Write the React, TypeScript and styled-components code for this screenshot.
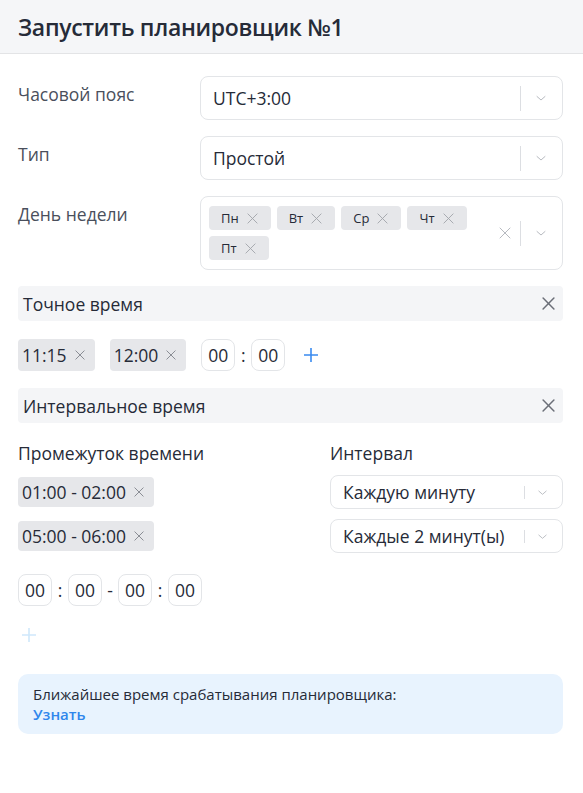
import React from "react";
import styled, { createGlobalStyle } from "styled-components";

const Global = createGlobalStyle`
  * { box-sizing: border-box; }
  body {
    margin: 0;
    background: #ffffff;
    font-family: "Open Sans", "Noto Sans", sans-serif;
    color: #262b38;
  }
`;

const Page = styled.div`
  width: 583px;
  min-height: 793px;
  background: #fff;
`;

const Header = styled.header`
  height: 54px;
  background: #f5f6f8;
  border-bottom: 1px solid #e3e4e6;
  display: flex;
  align-items: center;
  padding: 0 18px;
`;

const Title = styled.h1`
  margin: 0;
  font-size: 23px;
  font-weight: 600;
  color: #262b38;
  letter-spacing: -0.3px;
`;

const Body = styled.div`
  padding: 22px 20px 0 18px;
  display: flex;
  flex-direction: column;
`;

const FieldRow = styled.div<{ $mb?: number }>`
  display: grid;
  grid-template-columns: 182px 1fr;
  align-items: start;
  margin-bottom: ${(p) => p.$mb ?? 16}px;
`;

const Label = styled.div`
  font-size: 17.5px;
  color: #4a4f5c;
  padding-top: 6px;
  line-height: 24px;
`;

const SelectBox = styled.div`
  height: 44px;
  border: 1px solid #e3e5e8;
  border-radius: 8px;
  display: flex;
  align-items: center;
  padding-left: 12px;
  background: #fff;
`;

const SelectValue = styled.div`
  flex: 1;
  font-size: 17.5px;
  color: #262b38;
  line-height: 24px;
  white-space: nowrap;
`;

const Indicators = styled.div<{ $small?: boolean }>`
  display: flex;
  align-items: center;
  align-self: stretch;
  padding-right: ${(p) => (p.$small ? 14 : 15)}px;
`;

const Sep = styled.span<{ $h: number; $gap: number }>`
  width: 1px;
  height: ${(p) => p.$h}px;
  background: #dcdee2;
  margin-right: ${(p) => p.$gap}px;
`;

const ClearSlot = styled.span`
  display: inline-flex;
  margin-right: 9px;
`;

const MultiBox = styled(SelectBox)`
  height: auto;
  min-height: 74px;
  padding: 9px 0 9px 8px;
`;

const TagWrap = styled.div`
  flex: 1;
  display: flex;
  flex-wrap: wrap;
  gap: 6px;
  padding-right: 30px;
`;

const DayTag = styled.span`
  display: inline-flex;
  align-items: center;
  height: 24px;
  padding: 0 13px 0 12px;
  gap: 8px;
  background: #e6e7ea;
  border-radius: 4px;
  font-size: 13px;
  color: #262b38;
`;

const SectionBar = styled.div`
  height: 35px;
  background: #f4f5f7;
  border-radius: 4px;
  display: flex;
  align-items: center;
  justify-content: space-between;
  padding: 0 8px 0 5px;
  font-size: 17.5px;
  color: #262b38;
`;

const TimeRow = styled.div<{ $mt: number; $mb: number }>`
  display: flex;
  align-items: center;
  margin: ${(p) => p.$mt}px 0 ${(p) => p.$mb}px;
`;

const TimeTag = styled.span<{ $h?: number }>`
  display: inline-flex;
  align-items: center;
  height: ${(p) => p.$h ?? 32}px;
  padding: 0 10px 0 4px;
  gap: 8px;
  background: #e6e7ea;
  border-radius: 4px;
  font-size: 17.5px;
  color: #262b38;
  margin-right: 15px;
`;

const Cell = styled.span`
  display: inline-flex;
  align-items: center;
  justify-content: center;
  width: 34px;
  height: 32px;
  border: 1px solid #e3e5e8;
  border-radius: 8px;
  font-size: 17.5px;
  color: #262b38;
`;

const Punct = styled.span`
  width: 16px;
  text-align: center;
  font-size: 17.5px;
  color: #262b38;
`;

const PlusBtn = styled.span<{ $light?: boolean }>`
  display: inline-flex;
  margin-left: ${(p) => (p.$light ? 3 : 18)}px;
  color: ${(p) => (p.$light ? "#cfe8fb" : "#3a8bf0")};
`;

const IntervalGrid = styled.div`
  display: grid;
  grid-template-columns: 312px 1fr;
  row-gap: 10px;
  margin-top: 18px;
  align-items: center;
`;

const ColHead = styled.div`
  font-size: 17.5px;
  color: #262b38;
  line-height: 24px;
`;

const SmallSelect = styled(SelectBox)`
  height: 34px;
`;

const AddRow = styled.div`
  margin-top: 21px;
  height: 16px;
  display: flex;
  align-items: center;
`;

const Info = styled.div`
  margin-top: 31px;
  background: #e8f3fe;
  border-radius: 10px;
  padding: 10px 15px 10px;
  font-size: 15px;
  line-height: 20px;
  color: #262b38;
`;

const Link = styled.a`
  display: block;
  color: #2f86ec;
  font-weight: 600;
  text-decoration: none;
`;

const XIcon = ({ size = 12, color = "#9a9da4", w = 1.2 }: { size?: number; color?: string; w?: number }) => (
  <svg width={size} height={size} viewBox="0 0 12 12" fill="none">
    <path d="M1 1L11 11M11 1L1 11" stroke={color} strokeWidth={w} strokeLinecap="round" />
  </svg>
);

const Chevron = ({ size = 12 }: { size?: number }) => (
  <svg width={size} height={size} viewBox="0 0 12 12" fill="none">
    <path d="M2 4.5L6 8L10 4.5" stroke="#b7bac0" strokeWidth={1} strokeLinecap="round" strokeLinejoin="round" />
  </svg>
);

const Plus = ({ size = 16, w = 1.6 }: { size?: number; w?: number }) => (
  <svg width={size} height={size} viewBox="0 0 16 16" fill="none">
    <path d="M8 1V15M1 8H15" stroke="currentColor" strokeWidth={w} />
  </svg>
);

const Select = ({ value }: { value: string }) => (
  <SelectBox>
    <SelectValue>{value}</SelectValue>
    <Indicators>
      <Sep $h={25} $gap={14} />
      <Chevron />
    </Indicators>
  </SelectBox>
);

const SmallSel = ({ value }: { value: string }) => (
  <SmallSelect>
    <SelectValue>{value}</SelectValue>
    <Indicators $small>
      <Sep $h={13} $gap={12} />
      <Chevron size={11} />
    </Indicators>
  </SmallSelect>
);

const days = ["Пн", "Вт", "Ср", "Чт", "Пт"];

export default function App() {
  return (
    <Page>
      <Global />
      <Header>
        <Title>Запустить планировщик №1</Title>
      </Header>
      <Body>
        <FieldRow>
          <Label>Часовой пояс</Label>
          <Select value="UTC+3:00" />
        </FieldRow>
        <FieldRow>
          <Label>Тип</Label>
          <Select value="Простой" />
        </FieldRow>
        <FieldRow $mb={16}>
          <Label>День недели</Label>
          <MultiBox>
            <TagWrap>
              {days.map((d) => (
                <DayTag key={d}>
                  {d}
                  <XIcon size={11} color="#a2a5ab" w={1} />
                </DayTag>
              ))}
            </TagWrap>
            <Indicators>
              <ClearSlot>
                <XIcon size={12} color="#b7bac0" w={1} />
              </ClearSlot>
              <Sep $h={25} $gap={14} />
              <Chevron />
            </Indicators>
          </MultiBox>
        </FieldRow>

        <SectionBar>
          Точное время
          <XIcon size={13} color="#6b6f78" w={1.4} />
        </SectionBar>
        <TimeRow $mt={18} $mb={17}>
          <TimeTag>
            11:15
            <XIcon size={10} color="#8a8d94" w={1.2} />
          </TimeTag>
          <TimeTag>
            12:00
            <XIcon size={10} color="#8a8d94" w={1.2} />
          </TimeTag>
          <Cell>00</Cell>
          <Punct>:</Punct>
          <Cell>00</Cell>
          <PlusBtn>
            <Plus />
          </PlusBtn>
        </TimeRow>

        <SectionBar>
          Интервальное время
          <XIcon size={13} color="#6b6f78" w={1.4} />
        </SectionBar>

        <IntervalGrid>
          <ColHead>Промежуток времени</ColHead>
          <ColHead>Интервал</ColHead>
          <div>
            <TimeTag $h={30}>
              01:00 - 02:00
              <XIcon size={10} color="#8a8d94" w={1.2} />
            </TimeTag>
          </div>
          <SmallSel value="Каждую минуту" />
          <div>
            <TimeTag $h={30}>
              05:00 - 06:00
              <XIcon size={10} color="#8a8d94" w={1.2} />
            </TimeTag>
          </div>
          <SmallSel value="Каждые 2 минут(ы)" />
        </IntervalGrid>

        <TimeRow $mt={21} $mb={0}>
          <Cell>00</Cell>
          <Punct>:</Punct>
          <Cell>00</Cell>
          <Punct>-</Punct>
          <Cell>00</Cell>
          <Punct>:</Punct>
          <Cell>00</Cell>
        </TimeRow>

        <AddRow>
          <PlusBtn $light>
            <Plus />
          </PlusBtn>
        </AddRow>

        <Info>
          Ближайшее время срабатывания планировщика:
          <Link href="#">Узнать</Link>
        </Info>
      </Body>
    </Page>
  );
}
